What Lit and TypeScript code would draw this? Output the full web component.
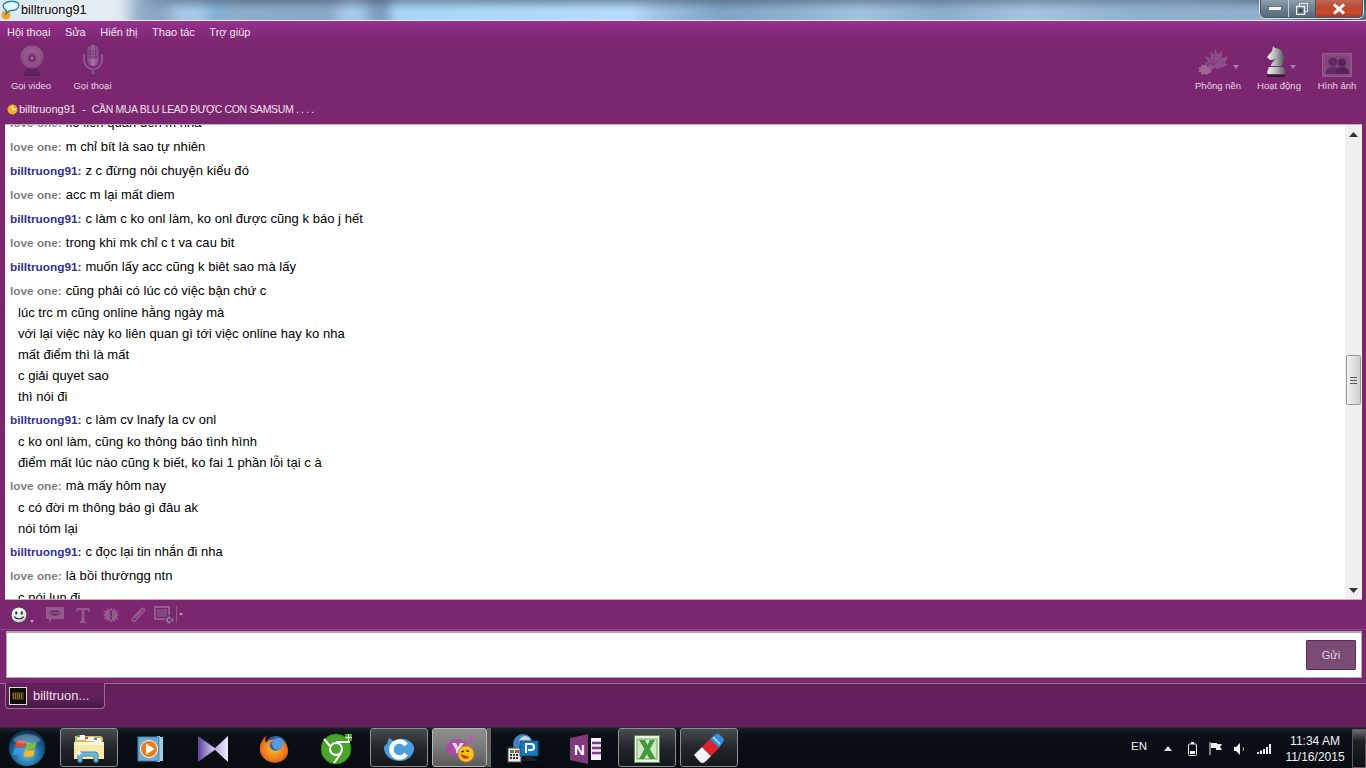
import { LitElement, html, css, svg } from "lit";
import { customElement } from "lit/decorators.js";

const B = "billtruong91:";
const L = "love one:";
const msgs: { n: string; t: string; c?: string[] }[] = [
  { n: L, t: "ko liên quan đến m nha" },
  { n: L, t: "m chỉ bít là sao tự nhiên" },
  { n: B, t: "z c đừng nói chuyện kiểu đó" },
  { n: L, t: "acc m lại mất diem" },
  { n: B, t: "c làm c ko onl làm, ko onl được cũng k báo j hết" },
  { n: L, t: "trong khi mk chỉ c t va cau bit" },
  { n: B, t: "muốn lấy acc cũng k biêt sao mà lấy" },
  { n: L, t: "cũng phải có lúc có việc bận chứ c", c: ["lúc trc m cũng online hằng ngày mà", "với lại việc này ko liên quan gì tới việc online hay ko nha", "mất điểm thì là mất", "c giải quyet sao", "thì nói đi"] },
  { n: B, t: "c làm cv lnafy la cv onl", c: ["c ko onl làm, cũng ko thông báo tình hình", "điểm mất lúc nào cũng k biết, ko fai 1 phần lỗi tại c à"] },
  { n: L, t: "mà mấy hôm nay", c: ["c có đời m thông báo gì đâu ak", "nói tóm lại"] },
  { n: B, t: "c đọc lại tin nhắn đi nha" },
  { n: L, t: "là bồi thườngg ntn", c: ["c nói lụn đi"] },
];

const ico = (w: number, h: number, body: unknown, vb?: string) => html`<svg width=${w} height=${h} viewBox=${vb ?? `0 0 ${w} ${h}`}>${body}</svg>`;

const camera = ico(26, 32, svg`
  <defs><radialGradient id="cam" cx=".5" cy=".42" r=".6"><stop offset="0" stop-color="#a8699e"/><stop offset="1" stop-color="#854580"/></radialGradient></defs>
  <path d="M5 29l4-7h8l4 7z" fill="#5f2260"/>
  <path d="M4 30h18" stroke="#5a2058" stroke-width="2"/>
  <circle cx="13" cy="12" r="11.500" fill="url(#cam)"/>
  <circle cx="13" cy="13" r="5.500" fill="#8a4b85"/><circle cx="13" cy="13" r="3.500" fill="#6c2f6b"/><circle cx="13" cy="13" r="1.500" fill="#a56a9f"/>`);
const mic = ico(20, 32, svg`
  <defs><linearGradient id="m1" x1="0" x2="1"><stop offset="0" stop-color="#7c4283"/><stop offset=".5" stop-color="#a972a6"/><stop offset="1" stop-color="#7d4482"/></linearGradient></defs>
  <rect x="4" y="0" width="12" height="21" rx="6" fill="url(#m1)"/>
  <path d="M5 6h10M5 9h10M5 12h10M10 1v13M7.500 1v13M12.500 1v13" stroke="#703472" stroke-width=".8"/>
  <path d="M1 9v6a9 9 0 0 0 18 0v-6" fill="none" stroke="#8f5892" stroke-width="2"/>
  <path d="M10 23v6" stroke="#854c88" stroke-width="3"/><path d="M4 31h12" stroke="#64296a" stroke-width="2"/>`);
const maple = ico(31, 30, svg`
  <path d="M17 1l3 7 4-5 0 8 6-2-3 7 3 2-8 3-2 1.500-3-1.500-5 .5-1-3-5-3 4-1-3-5 6 1-1-6 4 3z" fill="#8e4f89"/>
  <path d="M16 5v13M10 9l6 9M24 9l-8 9M8 15l8 3" stroke="#7b2f73" stroke-width=".8"/>
  <path d="M8 17l1.500 3 2-1.500 0 3 3-.5-1.500 3 1 1-3.500 1.500-2 1.500-2-1-3 .5-.5-2-3-1 1.500-2-1.500-2.500 3 .5 0-3 2 1z" fill="#9e6299"/>`);
const knight = ico(20, 31, svg`
  <defs><linearGradient id="kn" x1="0" x2="1"><stop offset="0" stop-color="#f4f4f4"/><stop offset=".5" stop-color="#b5b5b5"/><stop offset="1" stop-color="#555"/></linearGradient></defs>
  <path d="M7 0l2 2c5 0 9 4 9 10 0 3-1 5-2 8H5c0-3 3-5 5-7.500-2 1-4 1.500-6 1.500L1 11l5-6z" fill="url(#kn)"/>
  <path d="M3 21h15l1 3c1 2 1 3 0 4H2c-1-1-1-2 0-4z" fill="url(#kn)"/>
  <path d="M1 29h18v2H1z" fill="#2b1b2b"/>`);
const photo = ico(30, 24, svg`
  <rect x=".5" y=".5" width="29" height="23" fill="#8a4b85" stroke="#955a90"/>
  <rect x="3" y="3" width="24" height="18" fill="#82457c"/>
  <circle cx="11" cy="9" r="4.500" fill="#632966"/><path d="M4 21c0-6 3-7 7-7s7 1 7 7z" fill="#632966"/>
  <circle cx="20" cy="9.500" r="4" fill="#56235b"/><path d="M14 21c0-6 2-7 6-7s7 1 7 7z" fill="#56235b"/>`);
const smiley = ico(18, 18, svg`
  <defs><radialGradient id="sm" cx=".4" cy=".3" r=".8"><stop offset="0" stop-color="#fff"/><stop offset=".7" stop-color="#ddd"/><stop offset="1" stop-color="#8c8c8c"/></radialGradient></defs>
  <circle cx="9" cy="9" r="8" fill="url(#sm)" stroke="#4c3a4c" stroke-width="1"/>
  <ellipse cx="6.300" cy="7" rx="1.200" ry="1.800" fill="#333"/><ellipse cx="11.700" cy="7" rx="1.200" ry="1.800" fill="#333"/>
  <path d="M4.500 10.500c1.500 3 7.500 3 9 0" fill="none" stroke="#333" stroke-width="1.200"/>`);
const lips = ico(20, 17, svg`
  <path d="M1 1h18v12H7l-3 4v-4H1z" fill="#95588f"/>
  <path d="M4 7c3-3 4-2.500 6-2 2-.5 3-1 6 2-3 3.500-9 3.500-12 0z" fill="#6a2c69"/>
  <path d="M5 7h10" stroke="#ab76a6" stroke-width=".8"/>`);
const tT = ico(14, 16, svg`<path d="M.5 1h13v4h-1l-1-2H8.500v11l2 1v1h-7v-1l2-1V3H2.500l-1 2h-1z" fill="#95588f"/>`);
const burst = ico(16, 16, svg`
  <path d="M8 0l1.500 3L12 1l.5 3 3-.5-1.500 3L16 8l-2 1.500 1.500 3-3-.5-.5 3-2.500-2L8 16l-1.500-3L4 15l-.5-3-3 .5L2 9.500 0 8l2-1.500-1.500-3 3 .5L4 1l2.500 2z" fill="#95588f"/>
  <rect x="7" y="3.500" width="2" height="6" fill="#6a2c69"/><rect x="7" y="10.500" width="2" height="2" fill="#6a2c69"/>`);
const clip = ico(17, 18, svg`<path d="M13 3L4 12c-2 2 0 4.500 2 3l9-9.500c1.500-2-1-4-2.500-2.500L5 10.500c-1 1 0 2 1 1l6-6" fill="none" stroke="#95588f" stroke-width="1.600" stroke-linecap="round"/>`);
const screen = ico(21, 18, svg`
  <rect x="1" y="1" width="14" height="12" fill="#6a2c69" stroke="#a06c9c" stroke-width="1.500"/>
  <rect x="3" y="3" width="10" height="8" fill="#85467f"/>
  <path d="M13 10h4v2h3v4h-3v2h-4v-2h-2v-4h2z" fill="#a06c9c" stroke="#612863" stroke-width="1"/><rect x="14" y="13" width="3" height="2" fill="#612863"/>`);

const orb = ico(38, 38, svg`
  <defs><radialGradient id="ob" cx=".5" cy=".65" r=".62"><stop offset="0" stop-color="#62c0ec"/><stop offset=".6" stop-color="#1f6a9f"/><stop offset="1" stop-color="#0e2f4d"/></radialGradient></defs>
  <circle cx="18" cy="18" r="17.500" fill="url(#ob)" stroke="#0a1a28"/>
  <path d="M8 12c3-1.500 6-1.500 9 0l-1.500 6c-3-1.500-6-1.500-9 0z" fill="#e8492e"/>
  <path d="M18 12.500c3 1.500 6 1.500 9 0l-1.500 6c-3 1.500-6 1.500-9 0z" fill="#7fba3c"/>
  <path d="M6 19c3-1.500 6-1.500 9 0l-1.500 6c-3-1.500-6-1.500-9 0z" fill="#3f9bdc"/>
  <path d="M16.500 19.500c3 1.500 6 1.500 9 0l-1.500 6c-3 1.500-6 1.500-9 0z" fill="#f6b925"/>
  <path d="M5 11C8 3 28 3 31 11c-5 4-21 4-26 0z" fill="#fff" opacity=".25"/>`, "0 0 36 36");
const folder = ico(32, 30, svg`
  <path d="M2 2h26l2 2v20H2z" fill="#d9b95e"/>
  <rect x="4" y="1" width="8" height="5" fill="#f6f6f6"/><rect x="13" y="3" width="8" height="4" fill="#f6f6f6"/><rect x="21" y="4" width="7" height="4" fill="#f6f6f6"/>
  <rect x="4" y="1" width="3" height="2" fill="#2fae3a"/><rect x="12" y="3" width="3" height="2" fill="#d8483a"/><rect x="21" y="4" width="3" height="2" fill="#3a8ad8"/>
  <path d="M1 8h30v17H1z" fill="#f8e9a6"/><path d="M1 8h30v3H1z" fill="#fdf5cf"/>
  <path d="M5 28V21q0-3 3-3h14q3 0 3 3v7h-4v-5q0-1-1-1H10q-1 0-1 1v5z" fill="#6fb7dd" stroke="#3f87ad" stroke-width="1"/>
  <path d="M6 16l1 2 2 1-2 1-1 2-1-2-2-1 2-1z" fill="#fff"/>`);
const media = ico(28, 28, svg`
  <path d="M22 2h4v24h-4z" fill="#9fcde6"/><path d="M20 1h3v26h-3z" fill="#c6e4f3"/>
  <rect x="1" y="2" width="21" height="24" fill="#6cadd6" stroke="#3f80a8"/>
  <circle cx="12" cy="14" r="9" fill="#fff"/><circle cx="12" cy="14" r="8" fill="#ee7b1a"/>
  <path d="M9 8.500l8.500 5.500L9 19.500z" fill="#fff"/>`);
const vs = ico(32, 28, svg`
  <defs><linearGradient id="vs1" x1="0" x2="1"><stop offset="0" stop-color="#5a3fa0"/><stop offset="1" stop-color="#e6e0f6"/></linearGradient><linearGradient id="vs2" x1="0" x2="1"><stop offset="0" stop-color="#b7a7de"/><stop offset="1" stop-color="#f0ecfa"/></linearGradient></defs>
  <path d="M1 1l18 13L1 27z" fill="url(#vs1)"/><path d="M31 1v26L17 14z" fill="url(#vs2)"/>`);
const firefox = ico(30, 30, svg`
  <defs><radialGradient id="ff" cx=".5" cy=".5" r=".6"><stop offset="0" stop-color="#fbc02d"/><stop offset=".65" stop-color="#ef7a1e"/><stop offset="1" stop-color="#cf4312"/></radialGradient></defs>
  <circle cx="16" cy="13" r="11" fill="#2f64a8"/><circle cx="18" cy="10" r="6" fill="#5a9ad6"/>
  <path d="M7 1c-2 3-2 6-1 8 2-3 6-4 9-3-3 1-6 3-5 7 1 3 5 5 9 3 3-1 5-4 4-9 4 3 7 9 4 15-4 7-14 9-21 4C-3 20-2 8 7 1z" fill="url(#ff)"/>`);
const chromeG = ico(32, 32, svg`
  <circle cx="15" cy="16" r="15" fill="#4aa52a"/><circle cx="15" cy="16" r="15" fill="none" stroke="#2c7a1a"/>
  <circle cx="15" cy="16" r="6" fill="#4aa52a" stroke="#fff" stroke-width="2"/>
  <path d="M15 9h14M9 13L3 6M20 20l-7 10" stroke="#fff" stroke-width="2" fill="none"/>
  <path d="M24 1h7v7h-7z" fill="#4aa52a"/><path d="M24 4.500h7M27.500 1v7" stroke="#fff" stroke-width="1"/>`);
const ccloud = ico(32, 28, svg`
  <path d="M6 3l5 3c5-3 11-3 15 0 4 2 6 6 5 9-1 5-6 11-14 11C8 26 1 20 1 13c0-2 1-3 3-4z" fill="#4b9edb"/>
  <path d="M23 10a8 8 0 1 0 0 9" fill="none" stroke="#fff" stroke-width="4.500"/>`);
const yahoo = ico(30, 28, svg`
  <ellipse cx="11" cy="13" rx="11" ry="9" fill="#a64ea6"/>
  <path d="M6 8h4l2 4 2-4h4l-5 7v3h-3v-3z" fill="#e8d3e8"/>
  <path d="M24 0l4 1-3 10h-2z" fill="#b75cb5"/><circle cx="24" cy="13.500" r="1.500" fill="#b75cb5"/>
  <circle cx="20" cy="19" r="8" fill="#fcc41a" stroke="#c98a10"/>
  <path d="M15 17l3-1M20 15.500l3 1" stroke="#5a3408" stroke-width="1.500"/>
  <path d="M14.500 19c1 5 6 6 9 3z" fill="#c73a1d"/>`);
const rdp = ico(32, 32, svg`
  <circle cx="16" cy="11" r="10" fill="#3e82c4"/><circle cx="18" cy="9" r="6" fill="#c9d3dc"/>
  <rect x="1" y="15" width="13" height="14" fill="#eee" stroke="#555"/>
  <rect x="3" y="17" width="4" height="3" fill="#3a9a3a"/><rect x="8" y="17" width="4" height="3" fill="#d04a3a"/>
  <path d="M3 22h9M3 25h9" stroke="#333" stroke-width="2" stroke-dasharray="2 1"/>
  <rect x="13" y="8" width="18" height="15" fill="#1a79c2" stroke="#0a4f87"/>
  <path d="M19 20v-9h5q3 0 3 3t-3 3h-3" fill="none" stroke="#fff" stroke-width="2"/>
  <path d="M18 23h8v3h4v2H14v-2h4z" fill="#222"/>`);
const onenote = ico(32, 30, svg`
  <path d="M22 4h10v22H22z" fill="#f4f0f6"/><path d="M23 9h9M23 14h9M23 19h9" stroke="#7a3b92" stroke-width="2.500"/>
  <path d="M1 4L19 0v30L1 26z" fill="#80397b"/>
  <text x="5" y="21" font-family="Liberation Sans" font-size="15" font-weight="700" fill="#fff">N</text>`);
const excel = ico(26, 28, svg`
  <rect x=".5" y=".5" width="25" height="27" fill="#e8f2e2" stroke="#5e8f52"/>
  <rect x="3" y="4" width="20" height="20" fill="#d0e6c4" stroke="#7aa56c"/>
  <path d="M5 5h6l2.500 5L16 5h5l-5 9 5.500 10h-6l-2.500-5-3 5H5l5.500-10z" fill="#3f9b3b"/>`);
const eraser = ico(32, 32, svg`
  <path d="M1 22l8-8 9 9-6 6q-2 2-5 0z" fill="#f4f4f4"/>
  <path d="M9 14L17 6l9 9-8 8z" fill="#e0212e"/>
  <path d="M17 6l6-5q2-1 4 1l3 3q2 2 0 4l-4 6z" fill="#2f8fe0"/>
  <path d="M20 4l7 7" stroke="#9fd0f7" stroke-width="2"/>`);

@customElement("app-root")
export class AppRoot extends LitElement {
  static styles = css`
    :host { display: block; width: 1366px; height: 768px; overflow: hidden; font-family: "Liberation Sans", Arial, sans-serif; position: relative; background: #66205f; }
    * { box-sizing: border-box; }
    .titlebar { height: 21px; position: relative; overflow: hidden; display: flex; align-items: center; background: #c7dcee; border-bottom: 1px solid #dbeef2; }
    .aero { position: absolute; inset: -8px -10px; filter: blur(4px); background:
      linear-gradient(90deg, transparent 150px, rgba(62,78,100,.6) 190px, rgba(62,78,100,.6) 780px, rgba(70,90,112,.5) 1200px, rgba(20,28,36,.5) 1340px) top 0 left 0 / 100% 12px no-repeat,
      linear-gradient(90deg, #dbe8f2 0, #e3edf4 130px, #8eabc8 150px, #8aa6c4 173px, #a5c8e8 190px, #a5c8e8 210px, #7fb0d6 225px, #8cacc8 245px, #8ba8c6 340px, #a5c8ea 355px, #a5c8ea 370px, #7f9dbd 385px, #7f9dbd 395px, #a8d6f8 405px, #b5dcfa 640px, #9dc2e2 670px, #7ea4c6 730px, #8cafcc 790px, #a2c3df 870px, #8cadcc 950px, #a4c4df 1040px, #8fb0cf 1150px, #92b1ce 1270px, #4a5b6c 1325px, #1f2c38 1345px, #5b7287 1376px, #7c98b2 1386px); }
    .tb-ico { position: relative; width: 20px; height: 20px; flex: none; }
    .tb-title { position: relative; margin-left: 1px; font-size: 12.700px; color: #000; line-height: 20px; text-shadow: 0 0 4px #fff, 0 0 6px #fff; }
    .winbtns { position: absolute; right: 3px; top: 0; width: 103px; height: 18px; display: flex; border: 1px solid #4a5560; border-top: 0; border-radius: 0 0 5px 5px; box-shadow: 0 0 0 1px #d8e2ea; overflow: hidden; }
    .wb { flex: none; display: flex; align-items: center; justify-content: center; background: linear-gradient(#8e9eac, #6f8191 50%, #56687a); }
    .wb.min { width: 28px; border-right: 1px solid #c5d0d8; }
    .wb.max { width: 27px; border-right: 1px solid #4a5560; }
    .wb.close { flex: 1; background: linear-gradient(#c06a55, #b84b32 45%, #d1462a 75%, #98402c); }
    .purple { height: 102px; background: linear-gradient(#9a3190 0, #8a2c82 8px, #7b276f 22px, #7b276f 100%); color: #fff; }
    .menu { display: flex; height: 22px; align-items: center; padding: 0 0 0 7px; gap: 14.500px; font-size: 11px; color: #f2e6f0; }
    .tools { height: 55px; display: flex; justify-content: space-between; padding: 0 10px 0 0; }
    .tgroup { display: flex; }
    .tool { position: relative; display: flex; flex-direction: column; align-items: center; font-size: 9.500px; color: #e6d6e4; height: 55px; }
    .tool .pic { height: 34px; display: flex; align-items: flex-end; justify-content: center; }
    .tool .lbl { margin-top: 3px; line-height: 12px; white-space: nowrap; }
    .tool.video { width: 40px; margin-left: 11px; }
    .tool.voice { width: 37px; margin-left: 23px; }
    .tool.bg { width: 44px; } .tool.act { width: 44px; margin-left: 17px; } .tool.img { width: 38px; margin-left: 17px; }
    .tool.bg .pic { margin-right: 10px; } .tool.act .pic { margin-right: 6px; }
    .tool.video .pic { margin-left: 2px; }
    .caret { position: absolute; width: 0; height: 0; border: 3.500px solid transparent; border-top: 4px solid #a782a6; border-bottom: 0; top: 22px; }
    .tool.bg .caret { left: 37px; } .tool.act .caret { left: 33px; }
    .status { height: 25px; display: flex; align-items: center; padding: 0 0 3px 7px; font-size: 11px; color: #efe2ed; white-space: pre; }
    .status svg { margin-right: 1px; }
    .caps { font-size: 10.500px; letter-spacing: -.35px; }
    .chatwrap { height: 477px; padding: 1px 4px 0 5px; background: #7b276f; }
    .chat { height: 476px; background: #fff; border-top: 1px solid #bdb0bb; border-bottom: 1px solid #bdb0bb; display: flex; overflow: hidden; }
    .list { flex: 1; overflow: hidden; padding-left: 5px; }
    .inner { margin-top: -14px; }
    .msg { margin-bottom: 1px; font-size: 13px; letter-spacing: .03px; color: #000; }
    .line { height: 23px; line-height: 24px; white-space: pre; }
    .cont { height: 21px; line-height: 21px; padding-left: 8px; white-space: pre; }
    .nm { font-weight: 700; font-size: 11.800px; margin-right: 4px; letter-spacing: 0; }
    .nm.l { color: #7f7f7f; } .nm.b { color: #2e3199; }
    .sb { width: 17px; flex: none; background: #f0f0f0; display: flex; flex-direction: column; align-items: center; }
    .sb .end { height: 18px; display: flex; align-items: center; justify-content: center; }
    .thumb { width: 15px; height: 50px; margin-top: 212px; border: 1px solid #9a9a9a; border-radius: 2px; background: linear-gradient(90deg, #f2f2f2, #e2e2e2 50%, #cfcfcf); display: flex; flex-direction: column; align-items: center; justify-content: center; gap: 2px; }
    .thumb i { display: block; width: 7px; height: 1px; background: #555; }
    .sb .gap { flex: 1; }
    .fmt { height: 30px; background: #7b276f; display: flex; align-items: center; padding-left: 10px; border-bottom: 1px solid #8a4383; }
    .fmt .f { display: flex; flex: none; position: relative; }
    .mini { width: 0; height: 0; border: 2px solid transparent; border-top: 3px solid #b79ab5; border-bottom: 0; flex: none; }
    .sep { width: 1px; height: 17px; background: #95588f; flex: none; margin-left: 1px; }
    .inputwrap { height: 53px; padding: 1px 4px 5px 6px; background: #7b276f; }
    .input { height: 47px; background: #fff; border: 1px solid #b0a6b0; border-top-width: 2px; display: flex; justify-content: flex-end; align-items: center; padding-right: 5px; }
    .send { width: 50px; height: 30px; background: #7a4b73; border: 1px solid #61285d; border-radius: 1px; color: #e2d8e0; font-size: 11px; display: flex; align-items: center; justify-content: center; }
    .tabs { height: 47px; background: linear-gradient(#64205b, #671f5f); border-top: 1px solid #977091; padding-left: 5px; position: relative; }
    .tab { margin-top: -1px; width: 100px; height: 26px; border: 1px solid #977091; border-top: 0; border-radius: 0 0 4px 4px; background: linear-gradient(#64205b 50%, #471a45); display: flex; align-items: center; padding-left: 3px; font-size: 13px; color: #eadfe8; gap: 6px; }
    .avatar { width: 18px; height: 18px; background: #0e0c06; border: 1px solid #ddd; display: flex; align-items: center; justify-content: center; flex: none; }
    .taskbar { position: absolute; left: 0; right: 0; bottom: 0; height: 41px; background: linear-gradient(#1a2026 0, #0b1016 6px, #070b12); border-top: 1px solid #2a2d33; display: flex; align-items: center; }
    .startb { width: 58px; height: 40px; display: flex; align-items: center; justify-content: center; padding-right: 4px; flex: none; }
    .item { width: 62px; height: 40px; flex: none; display: flex; align-items: center; justify-content: center; position: relative; padding-top: 1px; }
    .item.on::before { content: ""; position: absolute; left: 2px; right: 2px; top: 0; bottom: 1px; border: 1px solid #8b8f94; border-radius: 3px; background: linear-gradient(#484c50, #22262b 50%, #15191e); }
    .item.act::before { content: ""; position: absolute; left: 2px; right: 5px; top: 0; bottom: 1px; border: 1px solid #b8b8b8; border-radius: 3px; background: linear-gradient(#8e8e8e, #7a7a7a 50%, #5a5a5a); }
    .item.act::after { content: ""; position: absolute; right: 1px; top: 0; bottom: 1px; width: 3px; border: 1px solid #666; border-left: 0; background: #5e5e5e; }
    .item svg { position: relative; z-index: 1; }
    .tray { margin-left: auto; display: flex; align-items: center; height: 40px; color: #f2f2f2; font-family: "Liberation Sans", sans-serif; }
    .en { font-size: 11.500px; margin-right: 9px; padding-bottom: 5px; }
    .tr { display: flex; align-items: center; justify-content: center; width: 24px; flex: none; padding-top: 1px; }
    .clock { width: 60px; margin: 0 7px 0 9px; text-align: center; font-size: 12px; line-height: 16px; padding-top: 2px; white-space: nowrap; }
    .desk { width: 14px; height: 39px; border: 1px solid #5a5a5a; background: linear-gradient(#6b6b6b, #1d2126 30%, #0d1116); }
  `;

  render() {
    return html`
      <div class="titlebar">
        <div class="aero"></div>
        <div class="tb-ico">${ico(20, 20, svg`
          <circle cx="6" cy="15" r="4.500" fill="#f3a51c"/>
          <path d="M5 3c4-2.500 10-2.500 13 0 2 3 0 6-3 7l-6 1-3 3 .5-3.500C3 8 2 5 5 3z" fill="#e6f6fa" stroke="#2a87a8" stroke-width="1.500"/>`)}</div>
        <div class="tb-title">billtruong91</div>
        <div class="winbtns">
          <div class="wb min">${ico(14, 6, svg`<rect x=".5" y=".5" width="13" height="4" fill="#f4f4f4" stroke="#3e4a56" stroke-width=".6"/>`)}</div>
          <div class="wb max">${ico(12, 12, svg`<rect x="3.500" y=".5" width="8" height="8" fill="none" stroke="#e6e6e6" stroke-width="1"/><rect x=".5" y="3.500" width="8" height="8" fill="#5b6c7c" stroke="#f4f4f4" stroke-width="1.500"/><rect x="3" y="6" width="3" height="3" fill="#3e4a56"/>`)}</div>
          <div class="wb close">${ico(16, 12, svg`<path d="M3 1.500l10 9M13 1.500l-10 9" stroke="#4d2a22" stroke-width="4.400" fill="none" opacity=".35"/><path d="M3 1.500l10 9M13 1.500l-10 9" stroke="#f6f1ee" stroke-width="3.200" fill="none"/>`)}</div>
        </div>
      </div>
      <div class="purple">
        <div class="menu"><span>Hội thoại</span><span>Sửa</span><span>Hiển thị</span><span>Thao tác</span><span>Trợ giúp</span></div>
        <div class="tools">
          <div class="tgroup">
            <div class="tool video"><div class="pic">${camera}</div><div class="lbl">Gọi video</div></div>
            <div class="tool voice"><div class="pic">${mic}</div><div class="lbl">Gọi thoại</div></div>
          </div>
          <div class="tgroup">
            <div class="tool bg"><div class="pic">${maple}</div><span class="caret"></span><div class="lbl">Phông nền</div></div>
            <div class="tool act"><div class="pic">${knight}</div><span class="caret"></span><div class="lbl">Hoạt động</div></div>
            <div class="tool img"><div class="pic">${photo}</div><div class="lbl">Hình ảnh</div></div>
          </div>
        </div>
        <div class="status">${ico(11, 11, svg`<circle cx="5.500" cy="5.500" r="5" fill="#f5b21e"/><path d="M5.500 2v3.500H9" stroke="#fff" stroke-width="1.200" fill="none"/>`)}<span>billtruong91  -  <span class="caps">CẦN MUA BLU LEAD ĐƯỢC CON SAMSUM . . . .</span></span></div>
      </div>
      <div class="chatwrap">
        <div class="chat">
          <div class="list"><div class="inner">
            ${msgs.map(m => html`<div class="msg">
              <div class="line"><span class="nm ${m.n === B ? "b" : "l"}">${m.n}</span>${m.t}</div>
              ${(m.c ?? []).map(c => html`<div class="cont">${c}</div>`)}
            </div>`)}
          </div></div>
          <div class="sb">
            <div class="end">${ico(9, 5, svg`<path d="M4.500 0L9 5H0z" fill="#333"/>`)}</div>
            <div class="thumb"><i></i><i></i><i></i></div>
            <div class="gap"></div>
            <div class="end">${ico(9, 5, svg`<path d="M4.500 5L9 0H0z" fill="#333"/>`)}</div>
          </div>
        </div>
      </div>
      <div class="fmt">
        <div class="f">${smiley}</div><div class="mini" style="margin:14px 0 0 2px"></div>
        <div class="f" style="margin-left:11px">${lips}</div>
        <div class="f" style="margin-left:11px">${tT}</div>
        <div class="f" style="margin-left:13px">${burst}</div>
        <div class="f" style="margin-left:10px">${clip}</div>
        <div class="f" style="margin-left:8px">${screen}</div><div class="sep"></div><div class="mini" style="margin:0 0 0 2px"></div>
      </div>
      <div class="inputwrap"><div class="input"><div class="send">Gửi</div></div></div>
      <div class="tabs">
        <div class="tab"><div class="avatar">${ico(14, 10, svg`<rect x="1" y="1" width="12" height="8" rx="1" fill="#3c3013"/><path d="M2 3h10M2 5h10M2 7h10" stroke="#caa651" stroke-width="1" stroke-dasharray="1 1"/>`)}</div><span>billtruon...</span></div>
      </div>
      <div class="taskbar">
        <div class="startb">${orb}</div>
        <div class="item on">${folder}</div>
        <div class="item">${media}</div>
        <div class="item">${vs}</div>
        <div class="item">${firefox}</div>
        <div class="item">${chromeG}</div>
        <div class="item on">${ccloud}</div>
        <div class="item act">${yahoo}</div>
        <div class="item">${rdp}</div>
        <div class="item">${onenote}</div>
        <div class="item on">${excel}</div>
        <div class="item on">${eraser}</div>
        <div class="tray">
          <div class="en">EN</div>
          <div class="tr">${ico(8, 5, svg`<path d="M4 0l4 5H0z" fill="#ddd"/>`)}</div>
          <div class="tr">${ico(9, 14, svg`<rect x=".5" y="2" width="8" height="11.500" rx="1" fill="none" stroke="#eee"/><rect x="3" y="0" width="3" height="2" fill="#eee"/><rect x="2" y="9" width="5" height="3" fill="#eee"/>`)}</div>
          <div class="tr">${ico(15, 13, svg`<path d="M1 0v13" stroke="#eee"/><path d="M2 1h6v1h5l-2 3 2 3H7V6H2z" fill="#eee"/>`)}</div>
          <div class="tr">${ico(12, 12, svg`<path d="M0 4h2l4-4v12L2 8H0z" fill="#eee"/><path d="M9 4q1 2 0 4" stroke="#aaa" fill="none"/>`)}</div>
          <div class="tr">${ico(14, 10, svg`<path d="M0 8h2v2H0zM3 6.500h2V10H3zM6 5h2v5H6zM9 3h2v7H9zM12 0h2v10h-2z" fill="#eee"/>`)}</div>
          <div class="clock">11:34 AM<br />11/16/2015</div>
          <div class="desk"></div>
        </div>
      </div>
    `;
  }
}
